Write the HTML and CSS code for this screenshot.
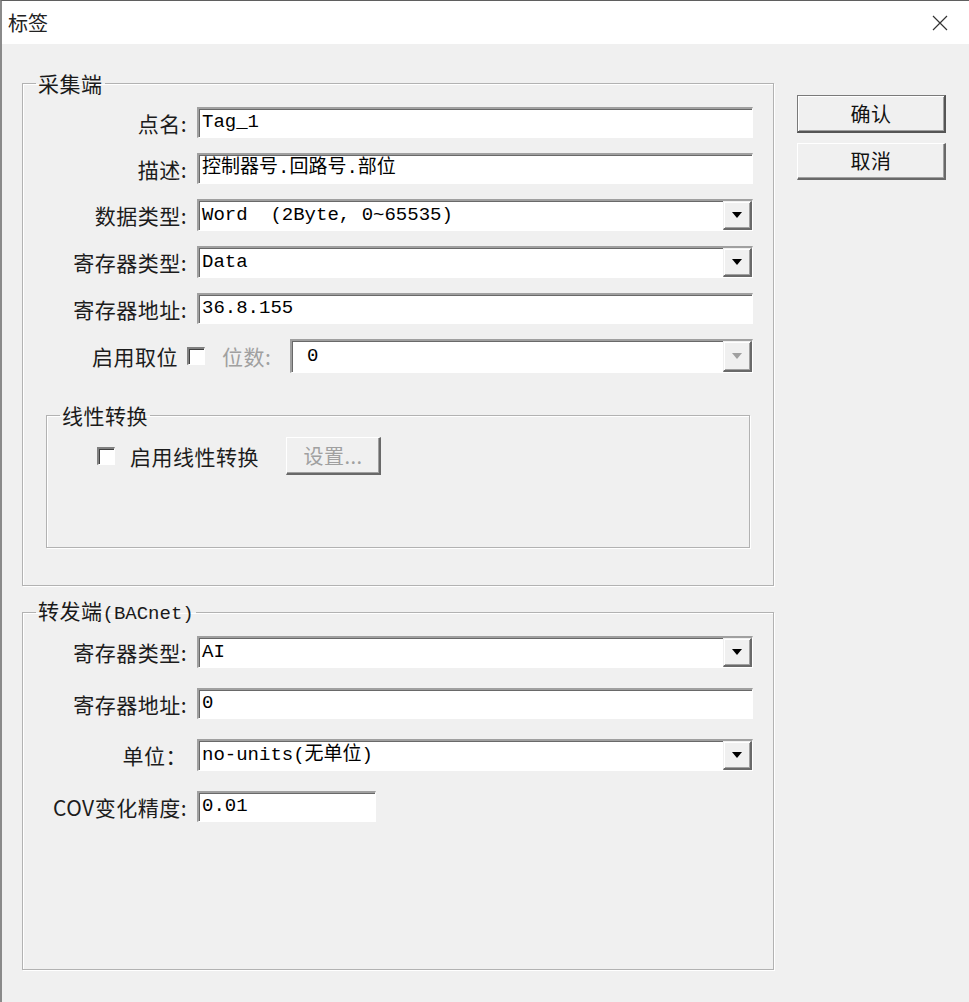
FILE: index.html
```html
<!DOCTYPE html>
<html lang="zh-CN">
<head>
<meta charset="utf-8">
<title>标签</title>
<link rel="stylesheet" href="styles.css">
</head>
<body>
<div class="window">
  <div class="titlebar">
    <span class="title">标签</span>
    <svg class="close" width="16" height="16" viewBox="0 0 16 16"><path d="M1 1L15 15M15 1L1 15" stroke="#333" stroke-width="1.2" fill="none"/></svg>
  </div>
  <div class="client">
    <div class="groups">
      <fieldset class="group g1">
        <legend>采集端</legend>
        <div class="form f1">
          <span class="lbl">点名:</span><div class="edit">Tag_1</div>
          <span class="lbl">描述:</span><div class="edit">控制器号.回路号.部位</div>
          <span class="lbl">数据类型:</span><div class="combo"><span class="val">Word  (2Byte, 0~65535)</span><span class="arrow"></span></div>
          <span class="lbl">寄存器类型:</span><div class="combo"><span class="val">Data</span><span class="arrow"></span></div>
          <span class="lbl">寄存器地址:</span><div class="edit">36.8.155</div>
        </div>
        <div class="bitrow">
          <span class="lbl bitname">启用取位</span>
          <span class="chk"></span>
          <span class="lbl bitlbl">位数:</span>
          <div class="combo disabled"><span class="val">0</span><span class="arrow"></span></div>
        </div>
        <fieldset class="group linear">
          <legend>线性转换</legend>
          <div class="linrow">
            <span class="chk"></span>
            <span class="lbl chklbl">启用线性转换</span>
            <span class="btn setbtn">设置...</span>
          </div>
        </fieldset>
      </fieldset>
      <fieldset class="group g2">
        <legend>转发端<span class="mono">(BACnet)</span></legend>
        <div class="form f2">
          <span class="lbl">寄存器类型:</span><div class="combo"><span class="val">AI</span><span class="arrow"></span></div>
          <span class="lbl">寄存器地址:</span><div class="edit">0</div>
          <span class="lbl">单位：</span><div class="combo"><span class="val">no-units(无单位)</span><span class="arrow"></span></div>
          <span class="lbl">COV变化精度:</span><div class="edit short">0.01</div>
        </div>
      </fieldset>
    </div>
    <div class="buttons">
      <span class="btn default">确认</span>
      <span class="btn cancel">取消</span>
    </div>
  </div>
</div>
</body>
</html>
```

FILE: styles.css
```css
html, body {
  margin: 0;
  padding: 0;
  background: #f0f0f0;
  font-family: "Noto Sans CJK SC", "Liberation Sans", sans-serif;
}

.window {
  width: 969px;
  height: 1002px;
  box-sizing: border-box;
  border-top: 1px solid #5f5f5f;
  border-left: 2px solid #8a8a8a;
  background: #f0f0f0;
  overflow: hidden;
}

.titlebar {
  height: 43px;
  background: #fff;
  display: flex;
  align-items: center;
  justify-content: space-between;
  padding: 0 21px 0 6px;
}

.title {
  font-size: 20px;
  line-height: 24px;
  color: #222;
}

.close {
  display: block;
}

.client {
  display: flex;
  align-items: flex-start;
  padding: 27px 0 0 20px;
}

.groups {
  width: 752px;
  display: flex;
  flex-direction: column;
}

fieldset.group {
  margin: 0;
  padding: 0;
  min-inline-size: 0;
  border: 1px solid #b2b2b2;
  box-shadow: inset 1px 1px 0 #fff, 1px 1px 0 #fff;
}

fieldset.g2 {
  margin-top: 12px;
}

legend {
  font-size: 21px;
  line-height: 24px;
  margin-left: 13px;
  padding: 0 2px;
  color: #1a1a1a;
  letter-spacing: 0.5px;
}

.mono {
  font-family: "Liberation Mono", "Noto Sans CJK SC", monospace;
  font-size: 19px;
  letter-spacing: 0;
}

.form {
  display: grid;
  grid-template-columns: 170px 1fr;
  column-gap: 4px;
  align-items: center;
  padding-right: 20px;
}

.f1 {
  padding-top: 12px;
  row-gap: 15px;
}

.f2 {
  padding-top: 10px;
  row-gap: 20px;
  padding-bottom: 147px;
}

.lbl {
  font-size: 21px;
  line-height: 28px;
  color: #1c1c1c;
  letter-spacing: 0.5px;
  white-space: nowrap;
  text-align: right;
  padding-right: 6px;
}

.edit,
.combo {
  box-sizing: border-box;
  background: #fff;
  border-style: solid;
  border-width: 2px 1px 1px 2px;
  border-color: #a0a0a0 #fff #fff #a0a0a0;
  box-shadow: inset 1px 1px 0 #696969;
  font-family: "Liberation Mono", "Noto Sans CJK SC", monospace;
  font-size: 19px;
  color: #000;
  white-space: pre;
}

.edit {
  height: 31px;
  line-height: 27px;
  padding-left: 3px;
}

.edit.short {
  width: 179px;
}

.combo {
  height: 32px;
  display: flex;
}

.combo .val {
  flex: 1;
  line-height: 28px;
  padding-left: 3px;
  overflow: hidden;
}

.combo .arrow {
  width: 29px;
  box-sizing: border-box;
  background: #f0f0f0;
  border-style: solid;
  border-width: 1px 2px 2px 1px;
  border-color: #f0f0f0 #696969 #696969 #f0f0f0;
  box-shadow: inset 1px 1px 0 #fff, inset -1px -1px 0 #a0a0a0;
  display: flex;
  align-items: center;
  justify-content: center;
}

.combo .arrow::after {
  content: "";
  width: 0;
  height: 0;
  border-left: 5px solid transparent;
  border-right: 5px solid transparent;
  border-top: 6px solid #000;
}

.combo.disabled .val {
  padding-left: 15px;
}

.combo.disabled .arrow::after {
  border-top-color: #a0a0a0;
}

.bitrow {
  display: flex;
  align-items: center;
  height: 34px;
  margin-top: 15px;
  padding-right: 20px;
}

.bitrow .combo {
  flex: 1;
  height: 34px;
  margin-left: 16px;
}

.bitrow .combo .val {
  line-height: 30px;
}

.bitname {
  width: 155px;
  box-sizing: border-box;
  padding-right: 0;
}

.bitlbl {
  width: 52px;
  margin-left: 17px;
  padding-right: 0;
  text-align: left;
  color: #a0a0a0;
}

.chk {
  display: block;
  flex: none;
  width: 18px;
  height: 18px;
  box-sizing: border-box;
  background: #fff;
  border-style: solid;
  border-width: 2px 1px 1px 2px;
  border-color: #808080 #fff #fff #808080;
  box-shadow: inset 1px 1px 0 #404040;
}

.bitrow .chk {
  margin-left: 9px;
}

fieldset.linear {
  margin: 30px 23px 37px 23px;
}

.linrow {
  display: flex;
  align-items: center;
  height: 38px;
  padding: 10px 0 72px 50px;
}

.chklbl {
  margin-left: 15px;
  padding-right: 0;
  text-align: left;
}

.btn {
  box-sizing: border-box;
  height: 38px;
  background: #f0f0f0;
  border-style: solid;
  border-width: 1px 2px 2px 1px;
  border-color: #fff #696969 #696969 #fff;
  box-shadow: inset -1px -1px 0 #a0a0a0;
  display: flex;
  align-items: center;
  justify-content: center;
  font-size: 20px;
  line-height: 24px;
  color: #111;
  letter-spacing: 0.5px;
}

.setbtn {
  width: 95px;
  margin-left: 27px;
  color: #a0a0a0;
}

.buttons {
  display: flex;
  flex-direction: column;
  width: 149px;
  margin: 24px 0 0 23px;
}

.btn.default {
  border-color: #7a7a7a #555 #555 #7a7a7a;
  box-shadow: inset 1px 1px 0 #fff, inset -1px -1px 0 #a0a0a0;
}

.btn.cancel {
  height: 37px;
  margin-top: 10px;
}
```
